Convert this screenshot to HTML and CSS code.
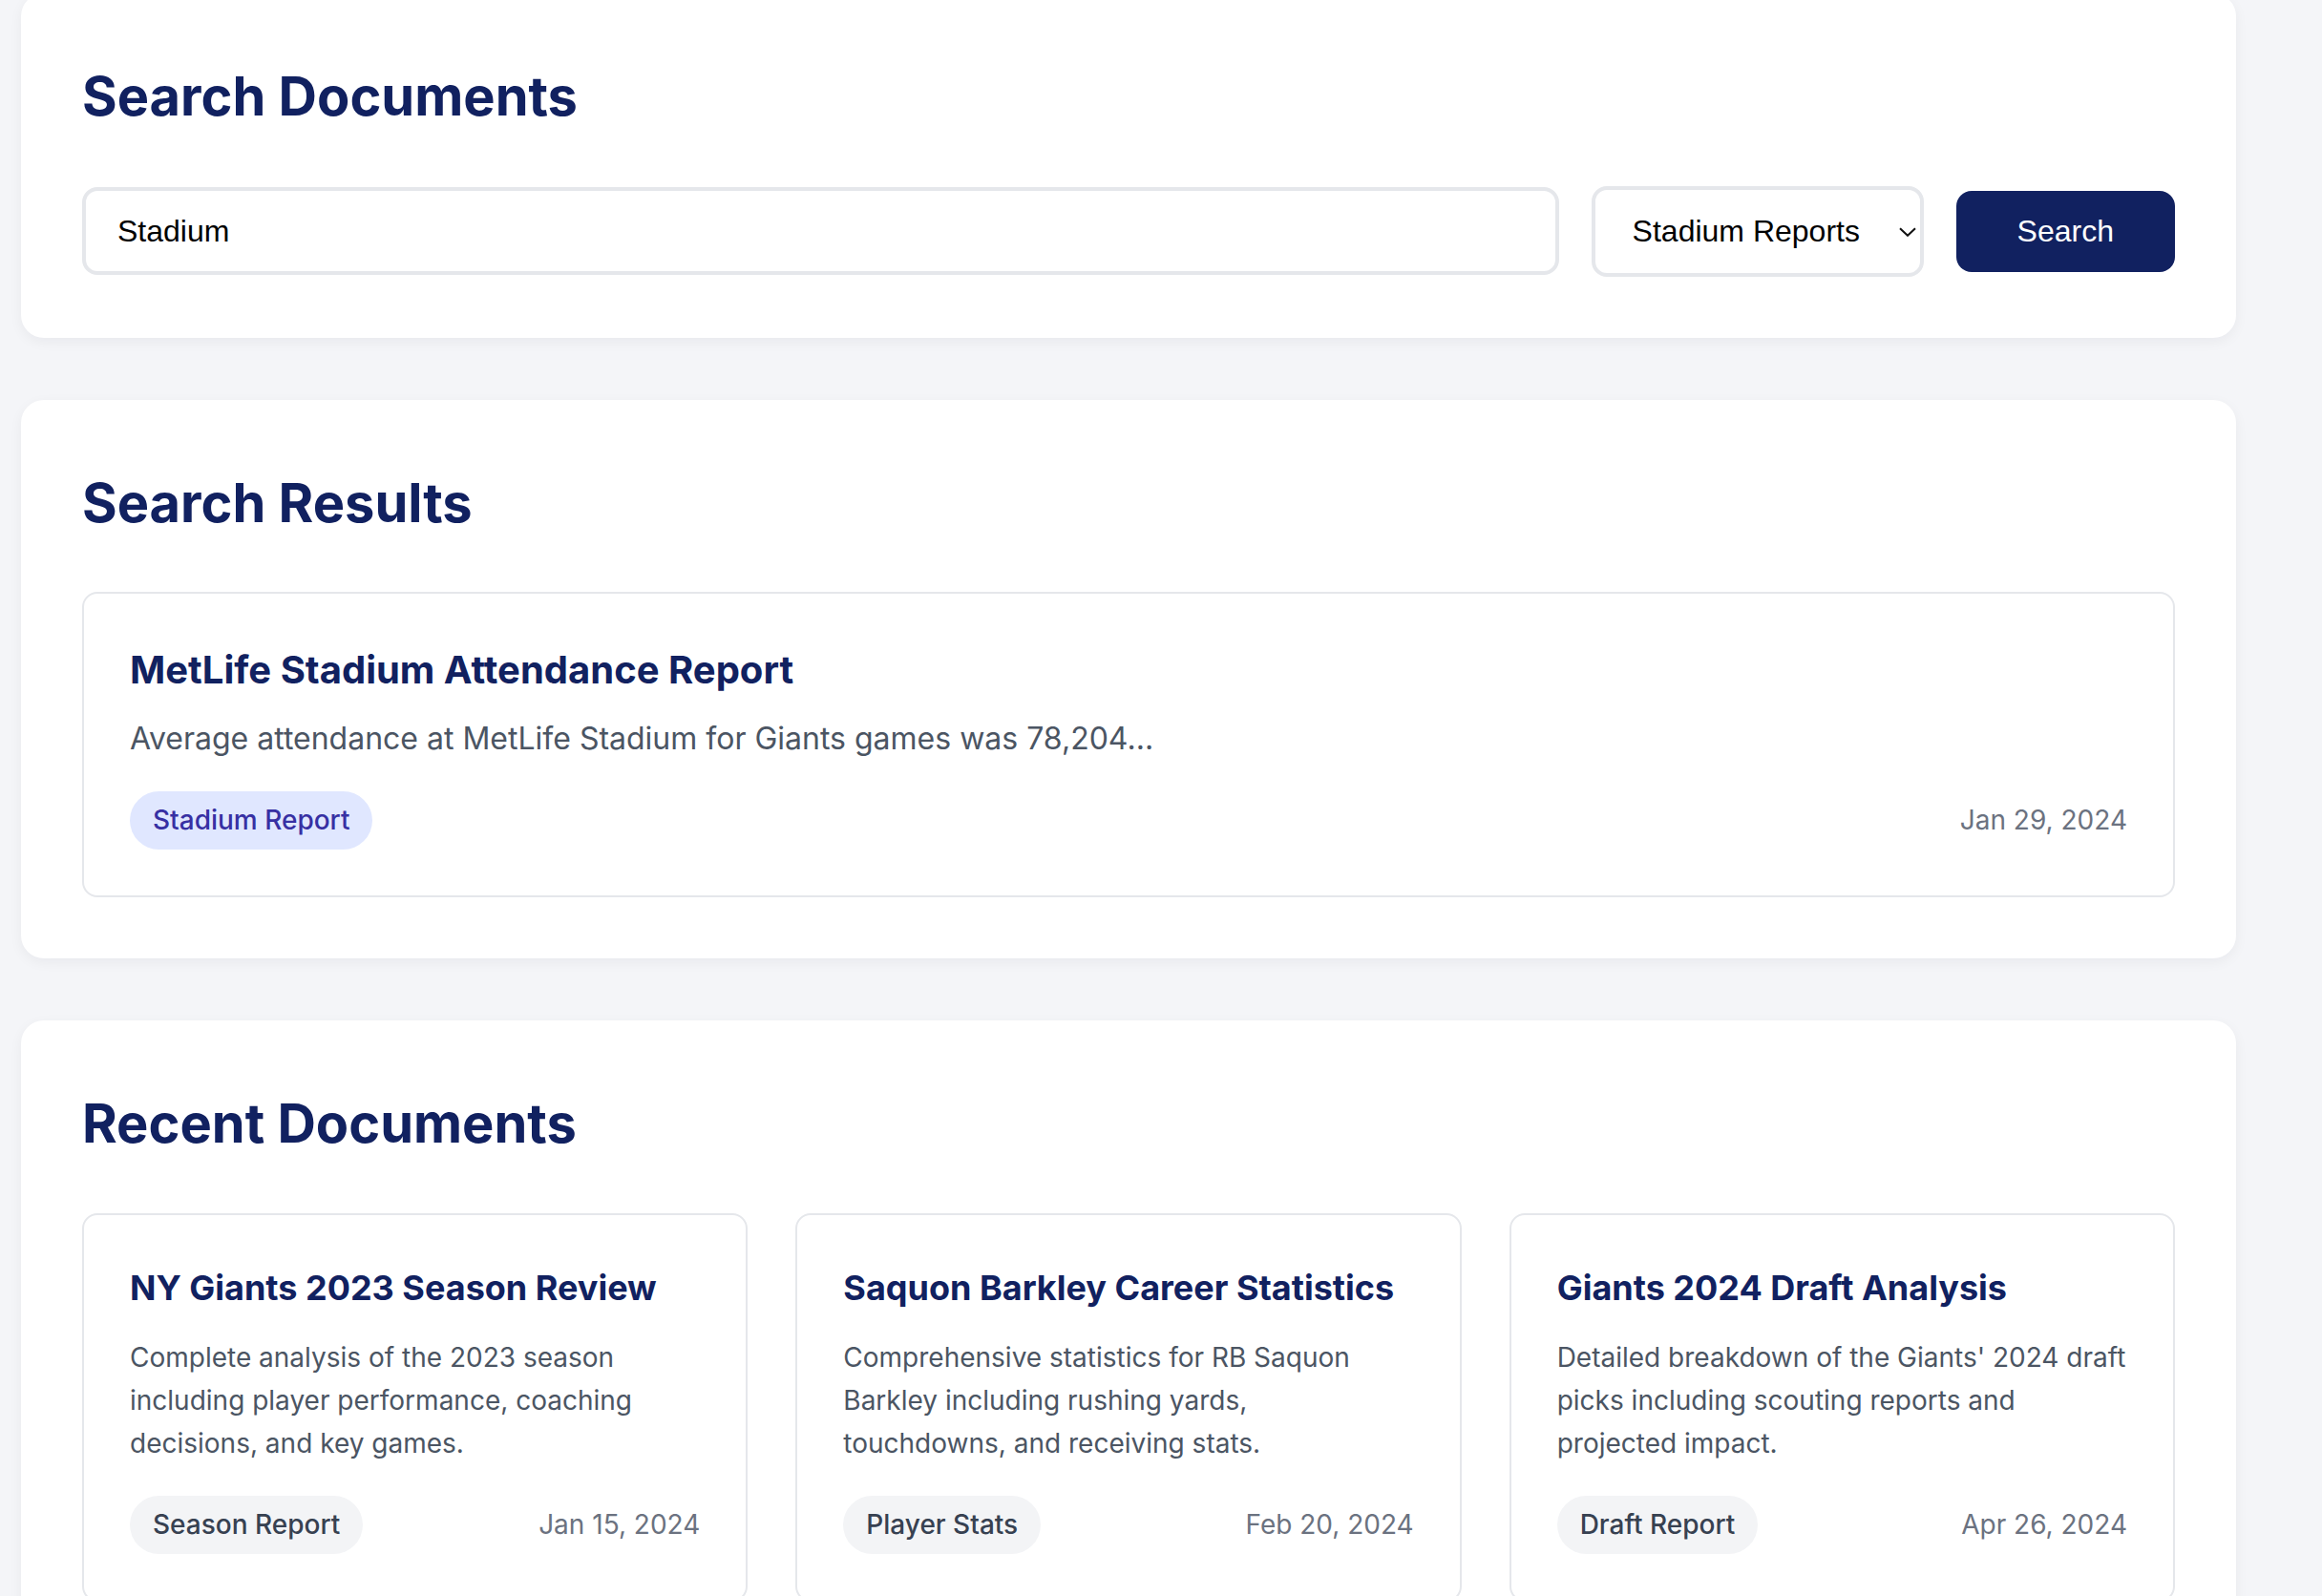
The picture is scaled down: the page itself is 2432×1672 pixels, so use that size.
FILE: index.html
```html
<!DOCTYPE html>
<html lang="en">
<head>
<meta charset="utf-8">
<title>Search Documents</title>
<link rel="stylesheet" href="styles.css">
</head>
<body>
<main class="page">
  <section class="panel">
    <h2 class="panel-title">Search Documents</h2>
    <form class="search-form">
      <input class="search-input" type="text" value="Stadium">
      <div class="select-wrap">
        <select class="search-select">
          <option>Stadium Reports</option>
          <option>Season Reports</option>
          <option>Player Stats</option>
          <option>Draft Reports</option>
        </select>
        <svg class="select-chevron" viewBox="0 0 18 10" aria-hidden="true"><path d="M1 1.2l8 7.6 8-7.6"/></svg>
      </div>
      <button class="search-button" type="button">Search</button>
    </form>
  </section>

  <section class="panel">
    <h2 class="panel-title">Search Results</h2>
    <article class="result-item">
      <h3 class="result-title">MetLife Stadium Attendance Report</h3>
      <p class="result-text">Average attendance at MetLife Stadium for Giants games was 78,204...</p>
      <div class="item-footer">
        <span class="tag tag-blue">Stadium Report</span>
        <span class="date">Jan 29, 2024</span>
      </div>
    </article>
  </section>

  <section class="panel">
    <h2 class="panel-title">Recent Documents</h2>
    <div class="doc-grid">
      <article class="doc-card">
        <h3 class="doc-title">NY Giants 2023 Season Review</h3>
        <p class="doc-text">Complete analysis of the 2023 season including player performance, coaching decisions, and key games.</p>
        <div class="item-footer">
          <span class="tag tag-gray">Season Report</span>
          <span class="date">Jan 15, 2024</span>
        </div>
      </article>
      <article class="doc-card">
        <h3 class="doc-title">Saquon Barkley Career Statistics</h3>
        <p class="doc-text">Comprehensive statistics for RB Saquon Barkley including rushing yards, touchdowns, and receiving stats.</p>
        <div class="item-footer">
          <span class="tag tag-gray">Player Stats</span>
          <span class="date">Feb 20, 2024</span>
        </div>
      </article>
      <article class="doc-card">
        <h3 class="doc-title">Giants 2024 Draft Analysis</h3>
        <p class="doc-text">Detailed breakdown of the Giants' 2024 draft picks including scouting reports and projected impact.</p>
        <div class="item-footer">
          <span class="tag tag-gray">Draft Report</span>
          <span class="date">Apr 26, 2024</span>
        </div>
      </article>
    </div>
  </section>
</main>
</body>
</html>
```

FILE: styles.css
```css
* {
  box-sizing: border-box;
}

html,
body {
  margin: 0;
  background: #f4f5f8;
}

body {
  font-family: Inter, "Noto Sans", sans-serif;
  line-height: 1.6;
  color: #111827;
}

.page {
  width: 2320px;
  margin: -7px 0 0 22px;
  display: flex;
  flex-direction: column;
  gap: 65px;
}

.panel {
  background: #ffffff;
  border-radius: 24px;
  padding: 64px;
  box-shadow: 0 4px 14px rgba(15, 23, 42, 0.05);
}

.panel-title {
  margin: 0 0 48px;
  font-size: 56px;
  font-weight: 700;
  line-height: 1.6;
  color: #112160;
}

/* search form */
.search-form {
  display: flex;
  align-items: center;
  gap: 34px;
  height: 95px;
  margin-top: 2px;
}

.search-input {
  flex: 1;
  min-width: 0;
  height: 92px;
  padding: 0 33px;
  border: 4px solid #e5e7eb;
  border-radius: 16px;
  background: #ffffff;
  color: #000000;
  font: 32px "Liberation Sans", Arial, sans-serif;
  outline: none;
}

.select-wrap {
  position: relative;
  flex: none;
  width: 348px;
  height: 95px;
}

.search-select {
  -webkit-appearance: none;
  appearance: none;
  width: 100%;
  height: 100%;
  padding: 0 60px 0 39px;
  border: 4px solid #e5e7eb;
  border-radius: 16px;
  background: #ffffff;
  color: #000000;
  font: 32px "Liberation Sans", Arial, sans-serif;
  outline: none;
}

.select-chevron {
  position: absolute;
  left: 322px;
  top: 43px;
  width: 18px;
  height: 10px;
  fill: none;
  stroke: #111111;
  stroke-width: 2;
  pointer-events: none;
}

.search-button {
  flex: none;
  height: 85px;
  padding: 0 64px;
  border: 0;
  border-radius: 16px;
  background: #112160;
  color: #ffffff;
  font: 32px "Liberation Sans", Arial, sans-serif;
  cursor: pointer;
}

/* result item */
.result-item {
  border: 2px solid #e5e7eb;
  border-radius: 16px;
  padding: 48px;
}

.result-title {
  margin: 0 0 14px;
  font-size: 40px;
  font-weight: 700;
  line-height: 1.6;
  color: #112160;
}

.result-text {
  margin: 0 0 30px;
  font-size: 32px;
  color: #4b5563;
}

.item-footer {
  display: flex;
  justify-content: space-between;
  align-items: center;
}

.tag {
  padding: 8px 24px;
  border-radius: 999px;
  font-size: 28px;
  font-weight: 500;
  line-height: 1.6;
}

.tag-blue {
  background: #e0e7ff;
  color: #3730a3;
}

.tag-gray {
  background: #f3f4f6;
  color: #374151;
}

.date {
  font-size: 28px;
  color: #6b7280;
}

/* recent documents */
.doc-grid {
  display: grid;
  grid-template-columns: repeat(3, 1fr);
  gap: 50px;
}

.doc-card {
  border: 2px solid #e5e7eb;
  border-radius: 16px;
  padding: 48px;
}

.doc-title {
  margin: 0 0 22px;
  font-size: 36px;
  font-weight: 700;
  line-height: 1.6;
  color: #112160;
}

.doc-text {
  margin: 0 0 32px;
  font-size: 28px;
  color: #4b5563;
}
```
